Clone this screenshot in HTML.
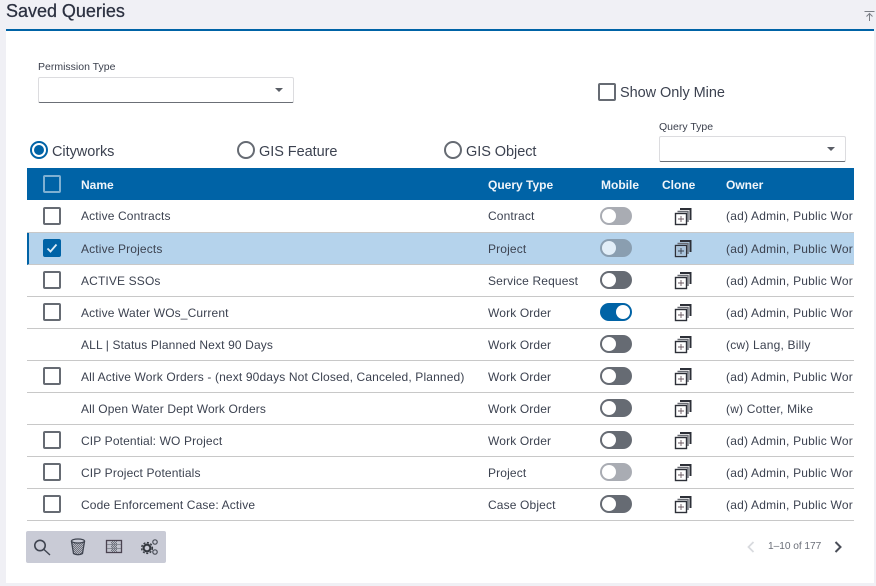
<!DOCTYPE html>
<html><head><meta charset="utf-8">
<style>
*{box-sizing:border-box}
html,body{margin:0;padding:0;width:876px;height:586px;overflow:hidden;background:#f0f0f5;font-family:"Liberation Sans",sans-serif;color:#3c4250}
.a{position:absolute;white-space:nowrap}
#panel{position:absolute;left:6px;top:29px;width:868px;height:554px;background:#fff;border-top:2px solid #0063a6}
.sel{position:absolute;background:#fff;border:1px solid #dcdcdf;border-bottom:1px solid #6b6f76;border-radius:2px}
.sel i{position:absolute;width:0;height:0;border-left:4px solid transparent;border-right:4px solid transparent;border-top:4px solid #5a5e66}
.lbl{font-size:10.5px;letter-spacing:0;color:#3a3f4c}
.big{font-size:14.5px;letter-spacing:-.05px;color:#3c4250}
.radio{position:absolute;width:18px;height:18px;border-radius:50%;border:2px solid #666b73;background:#fff}
.radio.on{border-color:#0063a6}
.radio.on b{position:absolute;left:2px;top:2px;width:10px;height:10px;border-radius:50%;background:#0063a6}
#hdr{position:absolute;left:27px;top:168px;width:827px;height:32px;background:#0063a6}
.h{position:absolute;top:178px;font-size:12px;font-weight:bold;color:#f0f5fa;white-space:nowrap}
.row{position:absolute;left:27px;width:827px;height:32px;border-bottom:1px solid #c8c8c8;overflow:hidden;font-size:12px;letter-spacing:.14px;color:#3c4250}
.row span{position:absolute;top:9px;white-space:nowrap;line-height:14px}
.n{left:54px}.q{left:461px}.o{left:699px}
.row span.o{letter-spacing:.2px}
.cb{position:absolute;left:16px;top:6px;width:18px;height:18px;border:2px solid #666b73;border-radius:2px;background:#fff}
.tg{position:absolute;left:573px;top:6px;width:32px;height:18px;border-radius:9px;background:#666b73}
.tg b{position:absolute;left:2px;top:2px;width:14px;height:14px;border-radius:50%;background:#fff}
.tg.dis{background:#a9acb3}
.tg.on{background:#0063a6}
.tg.on b{left:16px}
.cl{position:absolute;left:647px;top:7px}
</style></head><body>
<div class="a" style="left:6px;top:0;font-size:18px;letter-spacing:-.02px;color:#2b3040;line-height:23px;-webkit-text-stroke:.25px #2b3040">Saved Queries</div>
<svg class="a" style="left:864px;top:10px" width="11" height="12" viewBox="0 0 11 12"><path d="M0.5 1.5H10.5M5.5 11V3.5M2.5 6.5L5.5 3.5L8.5 6.5" fill="none" stroke="#7b7f86" stroke-width="1"/></svg>
<div id="panel"></div>

<div class="a lbl" style="left:38px;top:61px">Permission Type</div>
<div class="sel" style="left:38px;top:77px;width:256px;height:26px"><i style="left:236px;top:10px"></i></div>

<div class="a" style="left:598px;top:83px;width:18px;height:18px;border:2px solid #666b73;border-radius:2px"></div>
<div class="a big" style="left:620px;top:85px">Show Only Mine</div>

<div class="a lbl" style="left:659px;top:121px">Query Type</div>
<div class="sel" style="left:659px;top:136px;width:187px;height:26px"><i style="left:167px;top:10px"></i></div>

<div class="radio on" style="left:30px;top:141px"><b></b></div>
<div class="a big" style="left:52px;top:144px">Cityworks</div>
<div class="radio" style="left:237px;top:141px"></div>
<div class="a big" style="left:259px;top:144px">GIS Feature</div>
<div class="radio" style="left:444px;top:141px"></div>
<div class="a big" style="left:466px;top:144px">GIS Object</div>

<div id="hdr"></div>
<div class="a" style="left:43px;top:175px;width:18px;height:18px;border:2px solid #7fb0d2;border-radius:2px"></div>
<div class="h" style="left:81px">Name</div>
<div class="h" style="left:488px">Query Type</div>
<div class="h" style="left:601px">Mobile</div>
<div class="h" style="left:662px">Clone</div>
<div class="h" style="left:726px">Owner</div>

<svg width="0" height="0" style="position:absolute"><defs>
<g id="c"><path d="M6 1H16.5V12" fill="none" stroke="#2d3038" stroke-width="2"/><path d="M3.5 3.5H14V14" fill="none" stroke="#6a6d74" stroke-width="1.4"/><rect x="1.5" y="5.5" width="11" height="11" fill="#fff" stroke="#2d3038" stroke-width="1.4"/><path d="M7 8V14M4 11H10" stroke="#6a5a60" stroke-width=".9"/></g>
</defs></svg>

<div class="row" style="top:200px;height:33px"><div class="cb" style="top:7px"></div><span class="n">Active Contracts</span><span class="q">Contract</span><div class="tg dis" style="top:7px"><b></b></div><svg class="cl" style="top:8px" width="18" height="18"><use href="#c"/></svg><span class="o">(ad) Admin, Public Wor</span></div>

<div class="row" style="top:233px;background:#b5d3ec;border-left:2px solid #0063a6"><div class="cb" style="left:14px;background:#0063a6;border-color:#0063a6"><svg width="14" height="14" style="position:absolute;left:0;top:0"><path d="M2.5 7.5L5.5 10.5L11.5 3.5" fill="none" stroke="#dcebf6" stroke-width="1.8"/></svg></div><span class="n" style="left:52px">Active Projects</span><span class="q" style="left:459px">Project</span><div class="tg" style="left:571px;background:#8a9eb0"><b style="background:#e2eef8"></b></div><svg class="cl" style="left:645px" width="18" height="18"><rect x="1.5" y="5.5" width="11" height="11" fill="#b5d3ec"/><use href="#c"/><rect x="2.2" y="6.2" width="9.6" height="9.6" fill="#a9c4dc"/><path d="M7 8V14M4 11H10" stroke="#3a3f4c" stroke-width=".9"/></svg><span class="o" style="left:697px">(ad) Admin, Public Wor</span></div>

<div class="row" style="top:265px"><div class="cb"></div><span class="n">ACTIVE SSOs</span><span class="q">Service Request</span><div class="tg"><b></b></div><svg class="cl" width="18" height="18"><use href="#c"/></svg><span class="o">(ad) Admin, Public Wor</span></div>

<div class="row" style="top:297px"><div class="cb"></div><span class="n">Active Water WOs_Current</span><span class="q">Work Order</span><div class="tg on"><b></b></div><svg class="cl" width="18" height="18"><use href="#c"/></svg><span class="o">(ad) Admin, Public Wor</span></div>

<div class="row" style="top:329px"><span class="n">ALL | Status Planned Next 90 Days</span><span class="q">Work Order</span><div class="tg"><b></b></div><svg class="cl" width="18" height="18"><use href="#c"/></svg><span class="o">(cw) Lang, Billy</span></div>

<div class="row" style="top:361px"><div class="cb"></div><span class="n">All Active Work Orders - (next 90days Not Closed, Canceled, Planned)</span><span class="q">Work Order</span><div class="tg"><b></b></div><svg class="cl" width="18" height="18"><use href="#c"/></svg><span class="o">(ad) Admin, Public Wor</span></div>

<div class="row" style="top:393px"><span class="n">All Open Water Dept Work Orders</span><span class="q">Work Order</span><div class="tg"><b></b></div><svg class="cl" width="18" height="18"><use href="#c"/></svg><span class="o">(w) Cotter, Mike</span></div>

<div class="row" style="top:425px"><div class="cb"></div><span class="n">CIP Potential: WO Project</span><span class="q">Work Order</span><div class="tg"><b></b></div><svg class="cl" width="18" height="18"><use href="#c"/></svg><span class="o">(ad) Admin, Public Wor</span></div>

<div class="row" style="top:457px"><div class="cb"></div><span class="n">CIP Project Potentials</span><span class="q">Project</span><div class="tg dis"><b></b></div><svg class="cl" width="18" height="18"><use href="#c"/></svg><span class="o">(ad) Admin, Public Wor</span></div>

<div class="row" style="top:489px"><div class="cb"></div><span class="n">Code Enforcement Case: Active</span><span class="q">Case Object</span><div class="tg"><b></b></div><svg class="cl" width="18" height="18"><use href="#c"/></svg><span class="o">(ad) Admin, Public Wor</span></div>

<div class="a" style="left:26px;top:531px;width:140px;height:32px;background:#c9cbd6;border-radius:2px"></div>
<svg class="a" style="left:26px;top:531px" width="140" height="32" viewBox="0 0 140 32">
<defs><pattern id="d" width="2" height="2" patternUnits="userSpaceOnUse"><rect width="2" height="2" fill="#b4b6c0"/><rect width="1" height="1" fill="#6e717c"/><rect x="1" y="1" width="1" height="1" fill="#6e717c"/></pattern></defs>
<circle cx="14" cy="14.5" r="5.2" fill="none" stroke="#3f4450" stroke-width="1.6"/><path d="M18 18.5L24 24" stroke="#3f4450" stroke-width="1.4"/>
<path d="M45.5 10.5L47.5 22.5Q52 25 56.5 22.5L58.5 10.5Z" fill="url(#d)" stroke="#3f4450" stroke-width="1.3"/><ellipse cx="52" cy="10" rx="6.5" ry="2" fill="#c9cbd6" stroke="#3f4450" stroke-width="1.2"/>
<rect x="80.5" y="9.5" width="15" height="12" fill="#c2c4ce" stroke="#4a4350" stroke-width="1.3"/><rect x="85" y="10" width="6" height="11" fill="url(#d)"/><path d="M81 13.5H95M81 17.5H95" stroke="#7a7d88" stroke-width=".7"/>
<circle cx="121" cy="17" r="3.4" fill="none" stroke="#34383f" stroke-width="2.2"/><circle cx="121" cy="17" r="5.4" fill="none" stroke="#34383f" stroke-width="1.4" stroke-dasharray="2 1.6"/><circle cx="129" cy="11" r="2.2" fill="none" stroke="#4a4e58" stroke-width="1.2"/><circle cx="129" cy="21" r="2.2" fill="none" stroke="#4a4e58" stroke-width="1.2"/>
</svg>

<svg class="a" style="left:746px;top:540px" width="10" height="14"><path d="M7.5 2L2.5 7L7.5 12" fill="none" stroke="#d8dade" stroke-width="1.8"/></svg>
<div class="a" style="left:768px;top:541px;font-size:10.2px;letter-spacing:-.05px;color:#6b6f79">1–10 of 177</div>
<svg class="a" style="left:833px;top:540px" width="10" height="14"><path d="M2.5 2L7.5 7L2.5 12" fill="none" stroke="#4a4e58" stroke-width="2"/></svg>
</body></html>
